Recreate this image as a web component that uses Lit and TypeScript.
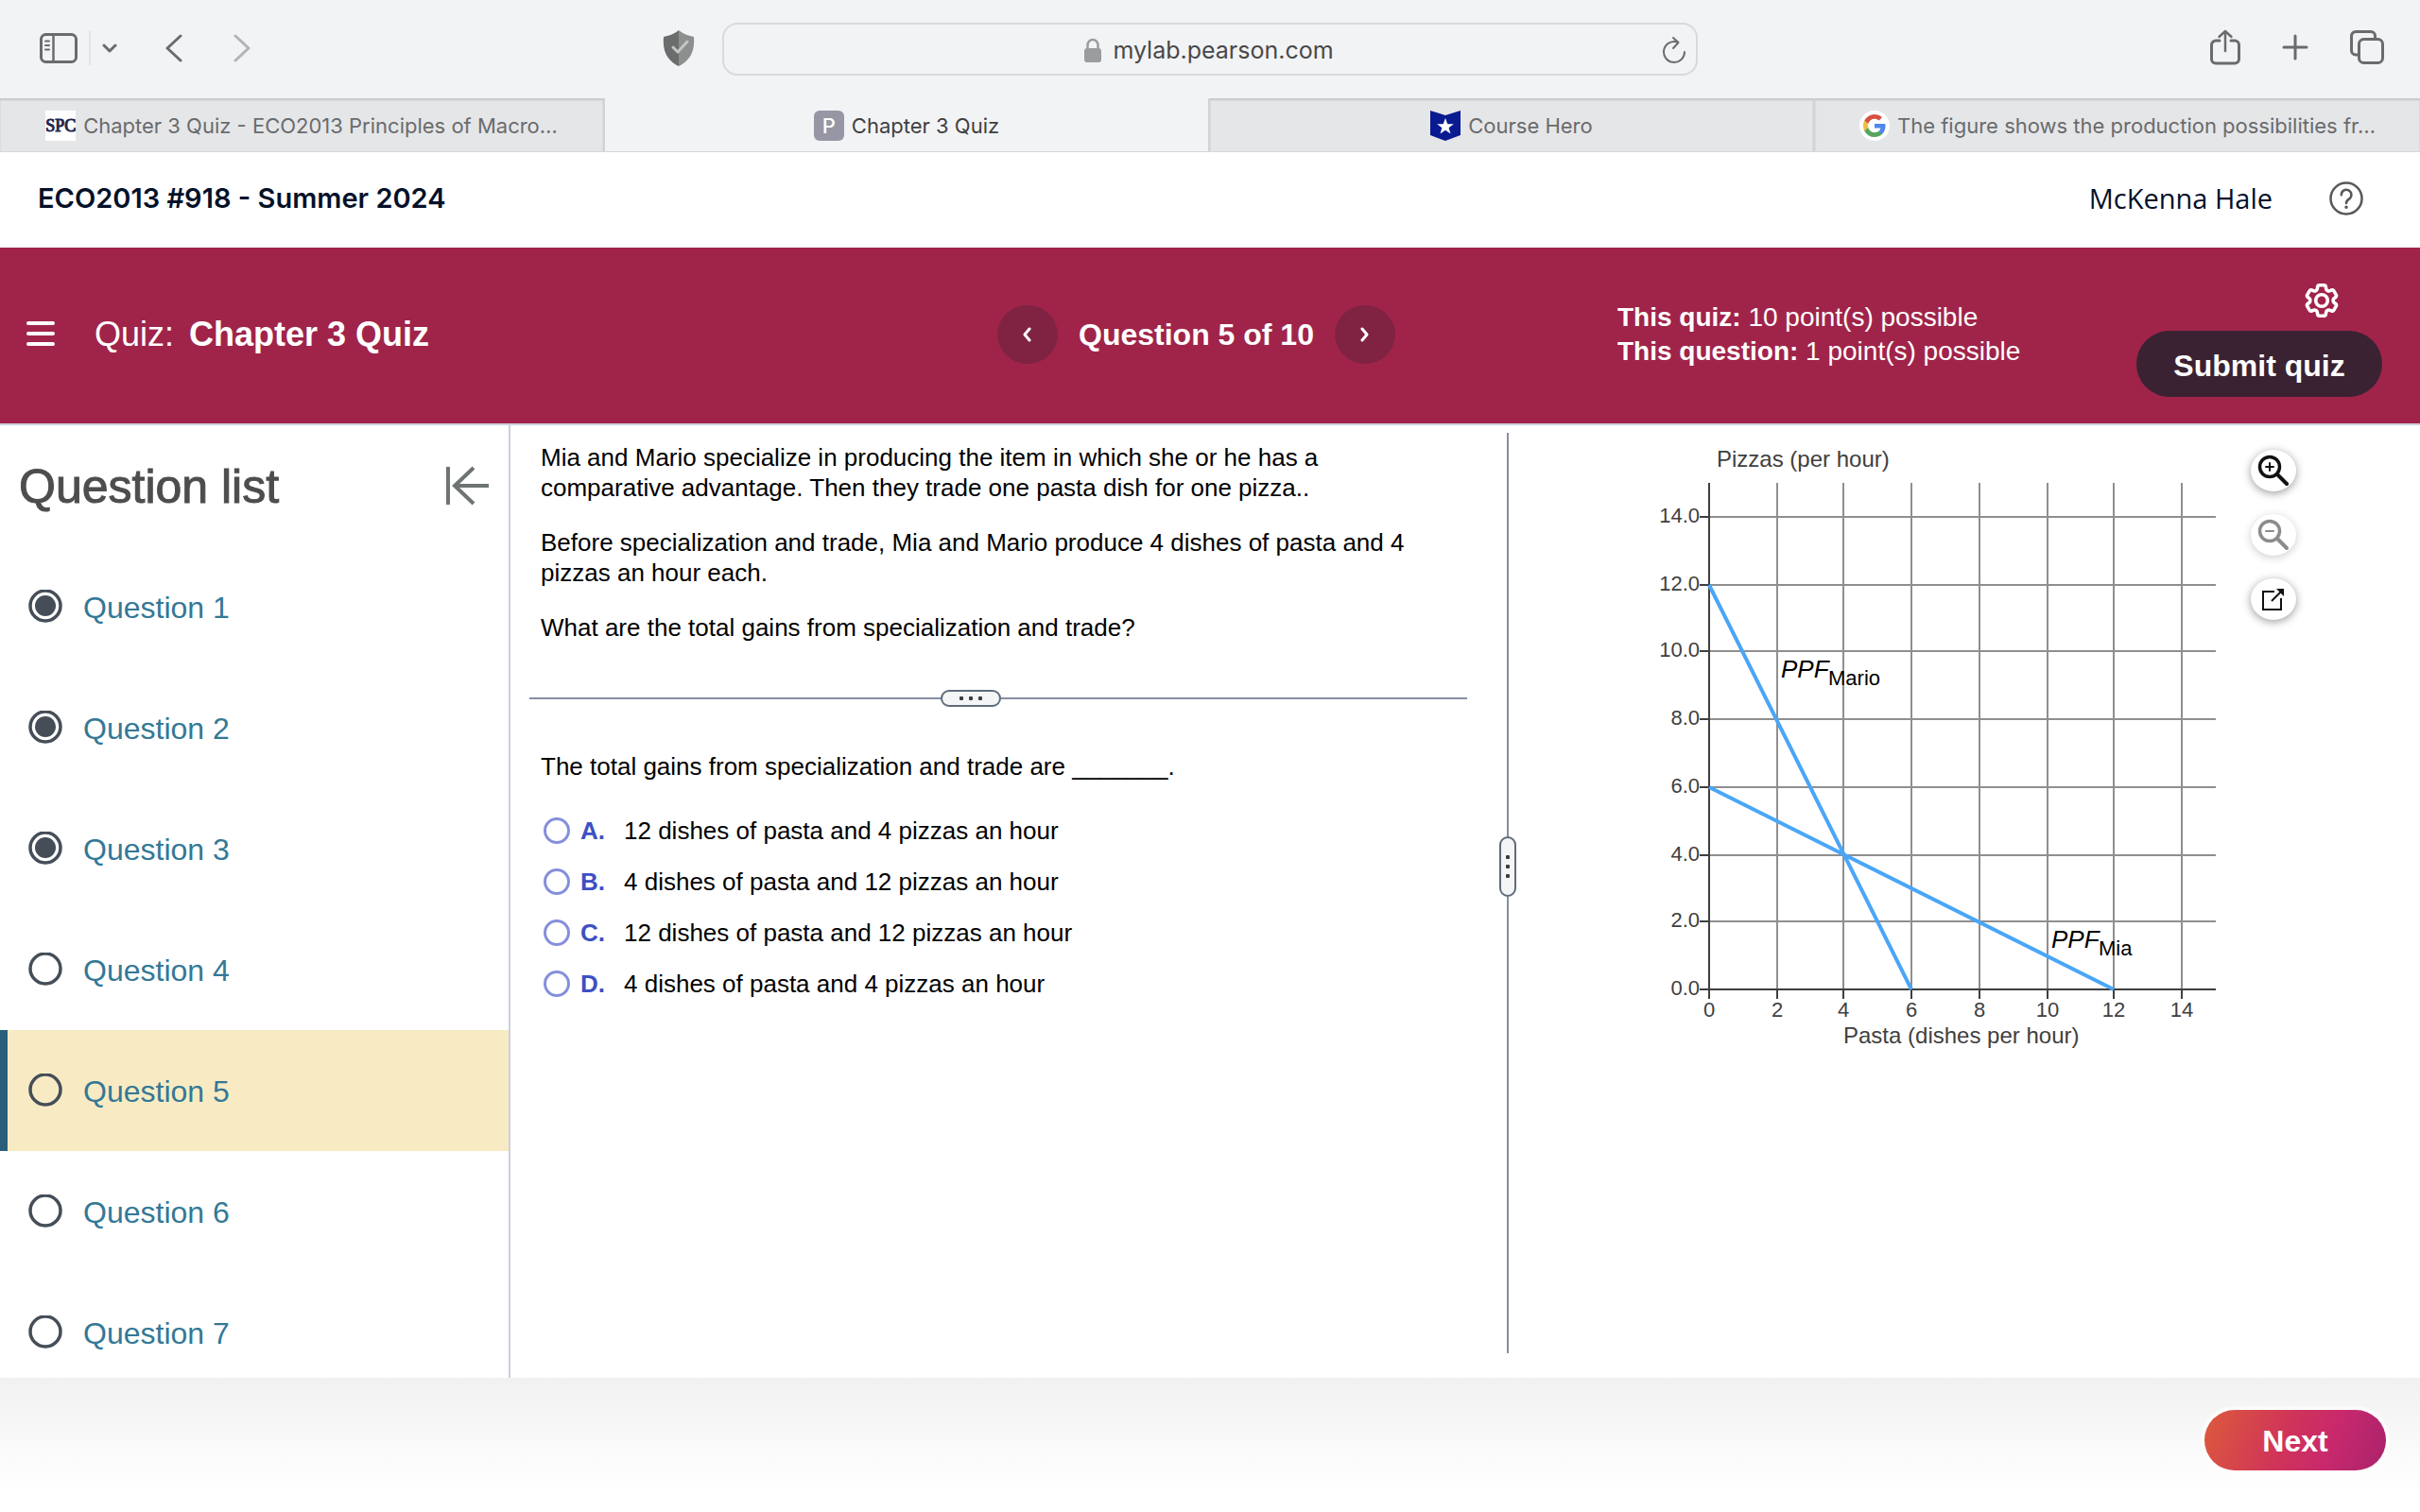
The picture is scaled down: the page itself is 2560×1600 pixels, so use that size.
import { LitElement, html, svg, css } from "lit";
import { customElement, property, state } from "lit/decorators.js";
import { classMap } from "lit/directives/class-map.js";

const icons = {
  sidebar: html`<svg width="40" height="32" viewBox="0 0 40 32" fill="none" stroke="currentColor" stroke-width="3"><rect x="1.5" y="1.5" width="37" height="29" rx="5" /><path d="M14.5 2v28" stroke-width="2.5" /><path d="M6 8.500h4M6 13h4M6 17.500h4" stroke-width="2" stroke-linecap="round" /></svg>`,
  caret: html`<svg width="16" height="10" viewBox="0 0 16 10" fill="none" stroke="currentColor" stroke-width="3" stroke-linecap="round" stroke-linejoin="round"><path d="M2 2l6 6 6-6" /></svg>`,
  back: html`<svg width="18" height="30" viewBox="0 0 18 30" fill="none" stroke="currentColor" stroke-width="3" stroke-linecap="round" stroke-linejoin="round"><path d="M16 2L2 15l14 13" /></svg>`,
  forward: html`<svg width="18" height="30" viewBox="0 0 18 30" fill="none" stroke="currentColor" stroke-width="3" stroke-linecap="round" stroke-linejoin="round"><path d="M2 2l14 13L2 28" /></svg>`,
  shield: html`<svg width="34" height="38" viewBox="0 0 34 38"><path d="M17 0C12 4 6 6 1 7c-1 13 2 24 16 31z" fill="#6b6c6c" /><path d="M17 0c5 4 11 6 16 7 1 13-2 24-16 31z" fill="#8d8e8e" /><path d="M11 18l5 5 10-11" fill="none" stroke="#c4c5c5" stroke-width="3" stroke-linecap="round" stroke-linejoin="round" /></svg>`,
  lock: html`<svg width="18" height="26" viewBox="0 0 18 26"><path d="M3.500 12V7.500a5.500 5.500 0 0 1 11 0V12" fill="none" stroke="#9b9c9d" stroke-width="2.500" /><rect x="0" y="11" width="18" height="15" rx="3" fill="#9b9c9d" /></svg>`,
  reload: html`<svg width="26" height="30" viewBox="0 0 26 30" fill="none" stroke="currentColor" stroke-width="2" stroke-linecap="round" stroke-linejoin="round"><path d="M16.500 6.500A11 11 0 1 0 24 17" /><path d="M12 2l5.500 5L12 13" /></svg>`,
  share: html`<svg width="32" height="38" viewBox="0 0 32 38" fill="none" stroke="currentColor" stroke-width="3" stroke-linecap="round" stroke-linejoin="round"><path d="M10 12H6a4.500 4.500 0 0 0-4.500 4.500v15A4.500 4.500 0 0 0 6 36h20a4.500 4.500 0 0 0 4.500-4.500v-15A4.500 4.500 0 0 0 26 12h-4" /><path d="M16 23V2M9.500 8L16 2l6.500 6" stroke-width="2.500" /></svg>`,
  plus: html`<svg width="28" height="28" viewBox="0 0 28 28" fill="none" stroke="currentColor" stroke-width="3" stroke-linecap="round"><path d="M14 2v24M2 14h24" /></svg>`,
  tabs: html`<svg width="36" height="36" viewBox="0 0 36 36" fill="none" stroke="currentColor" stroke-width="3"><rect x="9.500" y="9.500" width="25" height="25" rx="5" /><path d="M9 26H6a4.500 4.500 0 0 1-4.500-4.500V6A4.500 4.500 0 0 1 6 1.500h16A4.500 4.500 0 0 1 26.500 6v3" /></svg>`,
  hero: html`<svg width="32" height="32" viewBox="0 0 32 32"><path d="M0 0l16 5L32 0v26l-16 6-16-6z" fill="#0a1a91" /><path d="M16 8l2.300 6.200h6.500l-5.200 4 1.900 6.400L16 20.800l-5.500 3.800 1.900-6.400-5.200-4h6.500z" fill="#fff" /></svg>`,
  google: html`<svg width="32" height="32" viewBox="0 0 32 32"><circle cx="16" cy="16" r="16" fill="#fff" /><g transform="translate(4 4)"><path fill="#4f86ec" d="M23.500 12.300c0-.8-.1-1.600-.2-2.300H12v4.500h6.500a5.500 5.500 0 0 1-2.400 3.600v3h3.900c2.200-2.100 3.500-5.200 3.500-8.800z" /><path fill="#58a55c" d="M12 24c3.200 0 6-1.100 8-2.900l-3.900-3c-1.100.7-2.500 1.200-4.100 1.200-3.100 0-5.800-2.100-6.700-5H1.300v3.100A12 12 0 0 0 12 24z" /><path fill="#f1bd42" d="M5.300 14.300a7.200 7.200 0 0 1 0-4.600V6.600h-4a12 12 0 0 0 0 10.800z" /><path fill="#d85140" d="M12 4.800c1.800 0 3.300.6 4.600 1.800L20 3.200A12 12 0 0 0 1.300 6.600l4 3.100c.9-2.800 3.600-4.900 6.700-4.900z" /></g></svg>`,
  help: html`<svg width="36" height="36" viewBox="0 0 36 36" fill="none" stroke="currentColor" stroke-width="2.500" stroke-linecap="round"><circle cx="18" cy="18" r="16.500" /><path d="M12.800 14.300a5.300 5.300 0 1 1 8.400 4.100c-2.200 1.500-3.200 2.300-3.200 4.600" /><circle cx="18" cy="27.200" r="1" fill="currentColor" stroke-width="1.500" /></svg>`,
  menu: html`<svg width="30" height="28" viewBox="0 0 30 28" fill="none" stroke="currentColor" stroke-width="4" stroke-linecap="round"><path d="M2 2h26M2 13h26M2 24h26" /></svg>`,
  prev: html`<svg width="12" height="16" viewBox="0 0 12 16" fill="none" stroke="currentColor" stroke-width="3" stroke-linecap="round" stroke-linejoin="round"><path d="M8 2L3 8l5 6" /></svg>`,
  next: html`<svg width="12" height="16" viewBox="0 0 12 16" fill="none" stroke="currentColor" stroke-width="3" stroke-linecap="round" stroke-linejoin="round"><path d="M3 2l5 6-5 6" /></svg>`,
  gear: html`<svg width="36" height="36" viewBox="2 2 20 20" fill="none" stroke="currentColor" stroke-width="2" stroke-linejoin="round"><path d="M9.594 3.940c.09-.542.56-.94 1.110-.94h2.593c.55 0 1.020.398 1.110.94l.213 1.281c.063.374.313.686.645.87.074.04.147.083.22.127.325.196.72.257 1.075.124l1.217-.456a1.125 1.125 0 0 1 1.370.49l1.296 2.247a1.125 1.125 0 0 1-.26 1.431l-1.003.827c-.293.241-.438.613-.43.992a7.723 7.723 0 0 1 0 .255c-.008.378.137.75.43.991l1.004.827c.424.35.534.955.26 1.430l-1.298 2.247a1.125 1.125 0 0 1-1.369.491l-1.217-.456c-.355-.133-.75-.072-1.076.124a6.470 6.470 0 0 1-.22.128c-.331.183-.581.495-.644.869l-.213 1.281c-.09.543-.56.94-1.110.94h-2.594c-.55 0-1.019-.398-1.110-.94l-.213-1.281c-.062-.374-.312-.686-.644-.87a6.520 6.520 0 0 1-.22-.127c-.325-.196-.72-.257-1.076-.124l-1.217.456a1.125 1.125 0 0 1-1.369-.49l-1.297-2.247a1.125 1.125 0 0 1 .26-1.431l1.004-.827c.292-.24.437-.613.43-.991a6.932 6.932 0 0 1 0-.255c.007-.38-.138-.751-.43-.992l-1.004-.827a1.125 1.125 0 0 1-.26-1.430l1.297-2.247a1.125 1.125 0 0 1 1.370-.491l1.216.456c.356.133.751.072 1.076-.124.072-.044.146-.086.22-.128.332-.183.582-.495.644-.869l.214-1.280Z" /><circle cx="12" cy="12" r="3.500" /></svg>`,
  collapse: html`<svg width="46" height="42" viewBox="0 0 46 42" fill="none" stroke="currentColor" stroke-width="4"><path d="M2 1v40M45 21H9M29 2L9 21l20 19" stroke-width="4" /></svg>`,
  zoomIn: html`<svg width="34" height="34" viewBox="0 0 34 34" fill="none" stroke="currentColor" stroke-linecap="round"><circle cx="13" cy="13" r="10.500" stroke-width="3.500" /><path d="M21 21l10 10" stroke-width="4" /><path d="M13 9v8M9 13h8" stroke-width="2" /></svg>`,
  zoomOut: html`<svg width="34" height="34" viewBox="0 0 34 34" fill="none" stroke="currentColor" stroke-linecap="round"><circle cx="13" cy="13" r="10.500" stroke-width="3.500" /><path d="M21 21l10 10" stroke-width="4" /><path d="M9 13h8" stroke-width="2" /></svg>`,
  popout: html`<svg width="24" height="24" viewBox="0 0 24 24" fill="none" stroke="currentColor" stroke-width="2"><path d="M13 4H1v19h19V11" /><path d="M10 14L21 3" /><path d="M15 1h8v8z" fill="currentColor" stroke="none" /></svg>`,
};

const tabs = [
  { title: "Chapter 3 Quiz - ECO2013 Principles of Macro…", icon: html`<span class="fav spc">SPC</span>`, active: false },
  { title: "Chapter 3 Quiz", icon: html`<span class="fav letter">P</span>`, active: true },
  { title: "Course Hero", icon: icons.hero, active: false },
  { title: "The figure shows the production possibilities fr…", icon: icons.google, active: false },
];

@customElement("browser-chrome")
export class BrowserChrome extends LitElement {
  static styles = css`
    :host { display: block; background: #f2f3f5; color: #6a6b6c; font-family: Inter, "Liberation Sans", sans-serif; }
    button { border: 0; padding: 0; background: none; color: inherit; font: inherit; display: flex; align-items: center; justify-content: center; }
    svg { display: block; flex: none; }
    .toolbar { display: grid; grid-template-columns: minmax(0, 1fr) minmax(0, 1032px) minmax(0, 1fr); align-items: center; height: 104px; }
    .left, .right { display: flex; align-items: center; }
    .left { padding: 0 29px 2px 42px; }
    .rule { width: 2px; height: 36px; margin: 0 12px; background: #e2e3e5; }
    .back { margin-left: 51px; }
    .forward { margin-left: 54px; color: #b3b4b6; }
    .shield { margin-left: auto; }
    .right { justify-content: flex-end; gap: 44px; padding: 0 38px 4px 0; }
    .address { display: flex; align-items: center; justify-content: center; gap: 12px; height: 56px; box-sizing: border-box; border: 2px solid #d8d9db; border-radius: 16px; padding: 2px 10px 0 46px; }
    .address input { field-sizing: content; border: 0; padding: 0; background: none; outline: none; color: #48494a; font: 25px/32px Inter, "Liberation Sans", sans-serif; }
    .lock { margin-left: auto; }
    .reload { margin-left: auto; }
    .tabs { display: grid; grid-template-columns: repeat(4, minmax(0, 1fr)); border-bottom: 1px solid #d6d7d9; }
    .tab { height: 56px; padding: 2px 0 0; gap: 8px; font-size: 22px; line-height: 28px; white-space: nowrap; overflow: hidden; background: #e5e6e8; box-shadow: inset 0 2px 2px #c6c7c9; border-right: 2px solid #d2d3d5; }
    .tab:last-child { border-right: 0; }
    .tab.active { background: none; box-shadow: none; color: #3f4041; }
    .fav { width: 32px; height: 32px; line-height: 32px; text-align: center; flex: none; }
    .spc { background: #fff; color: #23234a; font-family: "Liberation Serif", serif; font-size: 18px; -webkit-text-stroke: 1px currentColor; }
    .letter { background: #9696a4; color: #fff; border-radius: 6px; font-weight: 500; }
  `;
  render() {
    return html`
      <div class="toolbar">
        <div class="left">
          <button aria-label="Show sidebar">${icons.sidebar}</button>
          <span class="rule"></span>
          <button aria-label="Tab groups">${icons.caret}</button>
          <button class="back" aria-label="Back">${icons.back}</button>
          <button class="forward" aria-label="Forward">${icons.forward}</button>
          <button class="shield" aria-label="Privacy report">${icons.shield}</button>
        </div>
        <div class="address">
          <span class="lock">${icons.lock}</span>
          <input aria-label="Address" value="mylab.pearson.com" />
          <button class="reload" aria-label="Reload">${icons.reload}</button>
        </div>
        <div class="right">
          <button aria-label="Share">${icons.share}</button>
          <button aria-label="New tab">${icons.plus}</button>
          <button aria-label="Tab overview">${icons.tabs}</button>
        </div>
      </div>
      <div class="tabs" role="tablist">
        ${tabs.map((t) => html`<button role="tab" aria-selected=${t.active} class=${classMap({ tab: true, active: t.active })}>${t.icon}<span>${t.title}</span></button>`)}
      </div>
    `;
  }
}

const ticks = [0, 2, 4, 6, 8, 10, 12, 14];
const unit = 17.86;
const xAt = (v: number) => 64 + Math.round(v * unit) * 2;
const yAt = (v: number) => 589 - Math.round(v * unit) * 2;

@customElement("ppf-chart")
export class PpfChart extends LitElement {
  static styles = css`
    :host { display: block; }
    svg { display: block; font-family: "Liberation Sans", Arial, sans-serif; }
    .grid { stroke: #8f8f8f; stroke-width: 2; }
    .axis { stroke: #3f3f3f; stroke-width: 2; }
    .curve { stroke: #4ba5f7; stroke-width: 4; }
    .tick { font-size: 22px; fill: #404040; }
    .title { font-size: 24px; fill: #404040; }
    .label { font-size: 26px; fill: #000; font-style: italic; }
    .sub { font-size: 22px; fill: #000; }
  `;
  render() {
    return html`<svg width="612" height="660" viewBox="0 0 612 660" role="img" aria-label="Production possibilities of Mia and Mario">
      ${ticks.map((v) => svg`<line class="grid" x1=${xAt(v)} x2=${xAt(v)} y1="53" y2="589" /><line class="grid" x1="64" x2="600" y1=${yAt(v)} y2=${yAt(v)} />`)}
      ${ticks.map((v) => svg`<line class="axis" x1=${xAt(v)} x2=${xAt(v)} y1="589" y2="599" /><line class="axis" x1="54" x2="64" y1=${yAt(v)} y2=${yAt(v)} />
        <text class="tick" x=${xAt(v)} y="618" text-anchor="middle">${v}</text>
        <text class="tick" x="54" y=${yAt(v) + 6} text-anchor="end">${v.toFixed(1)}</text>`)}
      <line class="axis" x1="64" x2="64" y1="53" y2="590" />
      <line class="axis" x1="64" x2="600" y1="589" y2="589" />
      <line class="curve" x1=${xAt(0)} y1=${yAt(12)} x2=${xAt(6)} y2=${yAt(0)} />
      <line class="curve" x1=${xAt(0)} y1=${yAt(6)} x2=${xAt(12)} y2=${yAt(0)} />
      <text class="title" x="72" y="36">Pizzas (per hour)</text>
      <text class="title" x="206" y="646">Pasta (dishes per hour)</text>
      <text class="label" x="140" y="259">PPF</text><text class="sub" x="190" y="267">Mario</text>
      <text class="label" x="426" y="545">PPF</text><text class="sub" x="476" y="553">Mia</text>
    </svg>`;
  }
}

const choices = [
  { key: "A", text: "12 dishes of pasta and 4 pizzas an hour" },
  { key: "B", text: "4 dishes of pasta and 12 pizzas an hour" },
  { key: "C", text: "12 dishes of pasta and 12 pizzas an hour" },
  { key: "D", text: "4 dishes of pasta and 4 pizzas an hour" },
];

@customElement("question-list")
export class QuestionList extends LitElement {
  @property({ type: Number }) current = 5;
  @property({ type: Number }) answered = 3;
  static styles = css`
    :host { display: block; border-right: 2px solid #cbd0dc; overflow: hidden; }
    .head { display: flex; align-items: center; justify-content: space-between; height: 128px; padding: 0 20px; color: #4d4d4d; }
    h2 { margin: 0; padding-top: 2px; font-weight: 400; font-size: 50px; line-height: 56px; -webkit-text-stroke: 1px currentColor; }
    button { border: 0; padding: 0; background: none; color: #6d7472; display: flex; }
    ul { list-style: none; margin: 0; padding: 0; }
    a { display: flex; align-items: center; gap: 22px; height: 128px; padding-left: 22px; border-left: 8px solid transparent; font-size: 32px; line-height: 40px; color: #347896; text-decoration: none; }
    a span { padding-top: 2px; }
    a.current { background: #f8ebc3; border-left-color: #285e7a; }
    svg { display: block; }
  `;
  render() {
    return html`
      <div class="head"><h2>Question list</h2><button aria-label="Collapse question list">${icons.collapse}</button></div>
      <ul>
        ${[1, 2, 3, 4, 5, 6, 7].map((n) => html`<li><a href="#question-${n}" class=${classMap({ current: n === this.current })}>
          <svg width="36" height="36" viewBox="0 0 36 36" fill="none" stroke="#454e58"><circle cx="18" cy="17" r="16" stroke-width="3.500" />${n <= this.answered ? svg`<circle cx="18" cy="17" r="11" fill="#454e58" stroke="none" />` : null}</svg>
          <span>Question ${n}</span></a></li>`)}
      </ul>`;
  }
}

@customElement("app-root")
export class AppRoot extends LitElement {
  @state() private choice = "";
  static styles = css`
    :host { display: flex; flex-direction: column; height: 100vh; background: #fff; font-family: "Liberation Sans", Arial, sans-serif; color: #000; overflow: hidden; }
    button { border: 0; padding: 0; background: none; color: inherit; font: inherit; display: flex; align-items: center; justify-content: center; }
    svg { display: block; flex: none; }
    browser-chrome { flex: none; }
    .course { flex: none; display: flex; align-items: center; justify-content: space-between; height: 101px; padding: 0 60px 4px 40px; box-sizing: border-box; color: #05112a; }
    .course h1 { margin: 0; font: 600 29px/40px Inter, sans-serif; }
    .user { display: flex; align-items: center; gap: 60px; font: 29px/40px "Open Sans", sans-serif; }
    .user button { color: #565958; }
    .bar { flex: none; display: grid; grid-template-columns: minmax(0, 1055fr) minmax(0, 656fr) minmax(0, 849fr); align-items: center; height: 188px; box-sizing: border-box; padding-bottom: 2px; border-bottom: 2px solid #cdd0dc; background: #a0244a; color: #fff; }
    .quiz { display: flex; align-items: center; gap: 42px; padding-left: 28px; }
    .quiz h2 { margin: 0; font-size: 36px; line-height: 44px; font-weight: 400; display: flex; gap: 16px; }
    .pager { display: flex; align-items: center; gap: 22px; font-size: 32px; line-height: 40px; font-weight: 700; white-space: nowrap; }
    .round { width: 64px; height: 62px; border-radius: 50%; background: #802343; }
    .status { display: flex; justify-content: space-between; align-items: center; padding-right: 40px; }
    .points { font-size: 28px; line-height: 36px; }
    .points p { margin: 0; }
    .actions { display: flex; flex-direction: column; align-items: flex-end; gap: 14px; padding-top: 12px; }
    .gear { margin-right: 46px; }
    .submit { height: 70px; width: 260px; border-radius: 35px; background: #3a2232; font-size: 32px; font-weight: 700; padding-top: 4px; }
    main { flex: 1 1 0; min-height: 0; display: grid; grid-template-columns: 540px minmax(0, 1046fr) 18px minmax(0, 956fr); grid-template-rows: minmax(0, 1fr); }
    .work { padding: 18px 34px 0 20px; }
    .stem { padding: 0 32px 0 12px; font-size: 26px; line-height: 32px; }
    .stem p { margin: 0 0 26px; }
    .split { display: flex; align-items: center; }
    .split i { flex: 15 1 0; background: #868ea0; }
    .split i:last-child { flex-grow: 17; }
    .grip { flex: none; box-sizing: border-box; border: 2px solid #5f6b7b; border-radius: 9px; background: #f3f5f7; gap: 6px; }
    .grip b { width: 4px; height: 4px; background: #3d3d3d; border-radius: 1px; }
    .across { margin-top: 50px; }
    .across i { height: 2px; }
    .across .grip { width: 64px; height: 18px; }
    .down { flex-direction: column; padding: 8px 0 26px; box-sizing: border-box; }
    .down i { width: 2px; }
    .down .grip { width: 18px; height: 64px; flex-direction: column; }
    fieldset { border: 0; margin: 0; padding: 47px 12px 0; min-width: 0; font-size: 26px; line-height: 32px; }
    legend { padding: 0; float: left; width: 100%; margin-bottom: 25px; }
    .choice { clear: both; display: flex; align-items: center; height: 54px; }
    .choice input { appearance: none; box-sizing: border-box; width: 28px; height: 28px; margin: 0 11px 0 3px; border: 3px solid #8490dc; border-radius: 50%; background: #fff; flex: none; }
    .choice input:checked { background: #3a4cc4; box-shadow: inset 0 0 0 4px #fff; }
    .choice b { width: 46px; color: #3d50c3; }
    .figure { display: flex; gap: 25px; padding: 8px 0 0 140px; }
    .figure ppf-chart { flex: none; }
    .tools { display: flex; flex-direction: column; gap: 24px; padding-top: 18px; }
    .tool { width: 48px; height: 44px; border-radius: 50%; background: #fff; box-shadow: 0 2px 10px rgba(0, 0, 0, 0.4); color: #111; }
    .tool:disabled { color: #8c8c8c; box-shadow: 0 2px 10px rgba(0, 0, 0, 0.2); }
    footer { flex: none; display: flex; justify-content: flex-end; align-items: flex-start; height: 142px; box-sizing: border-box; padding: 34px 36px 0; background: linear-gradient(#f1f1f1, #fff 84%); }
    .go { width: 192px; height: 64px; border-radius: 32px; background: linear-gradient(110deg, #dc5a3c, #d03359 45%, #c9296c 68%, #a9226c); box-shadow: 0 0 0 4px rgba(255, 255, 255, 0.6); color: #fff; font-size: 32px; font-weight: 700; padding-top: 2px; }
  `;
  render() {
    return html`
      <browser-chrome></browser-chrome>
      <header class="course">
        <h1>ECO2013 #918 - Summer 2024</h1>
        <div class="user"><span>McKenna Hale</span><button aria-label="Help">${icons.help}</button></div>
      </header>
      <section class="bar">
        <div class="quiz"><button aria-label="Menu">${icons.menu}</button><h2><span>Quiz:</span><strong>Chapter 3 Quiz</strong></h2></div>
        <nav class="pager">
          <button class="round" aria-label="Previous question">${icons.prev}</button>
          <span>Question 5 of 10</span>
          <button class="round" aria-label="Next question">${icons.next}</button>
        </nav>
        <div class="status">
          <div class="points"><p><strong>This quiz:</strong> 10 point(s) possible</p><p><strong>This question:</strong> 1 point(s) possible</p></div>
          <div class="actions"><button class="gear" aria-label="Settings">${icons.gear}</button><button class="submit">Submit quiz</button></div>
        </div>
      </section>
      <main>
        <question-list></question-list>
        <section class="work">
          <div class="stem">
            <p>Mia and Mario specialize in producing the item in which she or he has a comparative advantage. Then they trade one pasta dish for one pizza..</p>
            <p>Before specialization and trade, Mia and Mario produce 4 dishes of pasta and 4 pizzas an hour each.</p>
            <p>What are the total gains from specialization and trade?</p>
          </div>
          <div class="split across"><i></i><button class="grip" aria-label="Resize answer area"><b></b><b></b><b></b></button><i></i></div>
          <fieldset>
            <legend>The total gains from specialization and trade are _______.</legend>
            ${choices.map((c) => html`<label class="choice"><input type="radio" name="answer" .checked=${this.choice === c.key} @change=${() => (this.choice = c.key)} /><b>${c.key}.</b><span>${c.text}</span></label>`)}
          </fieldset>
        </section>
        <div class="split down"><i></i><button class="grip" aria-label="Resize panels"><b></b><b></b><b></b></button><i></i></div>
        <section class="figure">
          <ppf-chart></ppf-chart>
          <div class="tools">
            <button class="tool" aria-label="Zoom in">${icons.zoomIn}</button>
            <button class="tool" aria-label="Zoom out" disabled>${icons.zoomOut}</button>
            <button class="tool" aria-label="Open in new window">${icons.popout}</button>
          </div>
        </section>
      </main>
      <footer><button class="go">Next</button></footer>
    `;
  }
}
